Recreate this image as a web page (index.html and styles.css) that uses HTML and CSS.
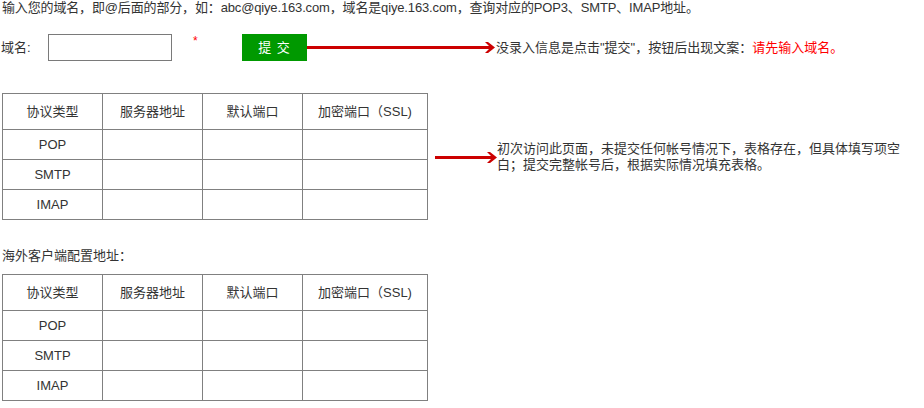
FILE: index.html
```html
<!DOCTYPE html>
<html lang="zh-CN">
<head>
<meta charset="utf-8">
<title>域名查询</title>
<link rel="stylesheet" href="styles.css">
</head>
<body>
<p class="intro">输入您的域名，即@后面的部分，如：abc@qiye.163.com，域名是qiye.163.com，查询对应的POP3、SMTP、IMAP地址。</p>

<div class="domain-row">
  <label class="domain-label">域名:</label>
  <input class="domain-input" type="text">
  <span class="required">*</span>
  <button class="submit-btn" type="button">提 交</button>
  <svg class="arrow arrow-long" width="188" height="14" viewBox="0 0 188 14">
    <rect x="0" y="5" width="182" height="3" fill="#cc0000"/>
    <polygon points="178,1 181,1 188,6.5 181,12 178,12 182,8 182,5" fill="#cc0000"/>
  </svg>
  <span class="note">没录入信息是点击"提交"，按钮后出现文案：<span class="warn">请先输入域名。</span></span>
</div>

<div class="result-row">
  <table class="config-table">
    <colgroup><col class="c1"><col class="c2"><col class="c3"><col class="c4"></colgroup>
    <thead>
      <tr><th>协议类型</th><th>服务器地址</th><th>默认端口</th><th>加密端口（SSL)</th></tr>
    </thead>
    <tbody>
      <tr><td>POP</td><td></td><td></td><td></td></tr>
      <tr><td>SMTP</td><td></td><td></td><td></td></tr>
      <tr><td>IMAP</td><td></td><td></td><td></td></tr>
    </tbody>
  </table>
  <svg class="arrow arrow-short" width="62" height="14" viewBox="0 0 62 14">
    <rect x="0" y="5" width="56" height="3" fill="#cc0000"/>
    <polygon points="52,1 55,1 62,6.5 55,12 52,12 56,8 56,5" fill="#cc0000"/>
  </svg>
  <p class="note note-block">初次访问此页面，未提交任何帐号情况下，表格存在，但具体填写项空白；提交完整帐号后，根据实际情况填充表格。</p>
</div>

<p class="overseas">海外客户端配置地址：</p>
<table class="config-table config-table-2">
  <colgroup><col class="c1"><col class="c2"><col class="c3"><col class="c4"></colgroup>
  <thead>
    <tr><th>协议类型</th><th>服务器地址</th><th>默认端口</th><th>加密端口（SSL)</th></tr>
  </thead>
  <tbody>
    <tr><td>POP</td><td></td><td></td><td></td></tr>
    <tr><td>SMTP</td><td></td><td></td><td></td></tr>
    <tr><td>IMAP</td><td></td><td></td><td></td></tr>
  </tbody>
</table>
</body>
</html>
```
FILE: styles.css
```css
html, body {
  margin: 0;
  padding: 0;
  background: #fff;
}
body {
  font-family: "Liberation Sans", "Noto Sans CJK SC", sans-serif;
  font-size: 13px;
  line-height: 16px;
  color: #333;
  padding-left: 2px;
}
.intro {
  margin: 0;
  height: 16px;
  letter-spacing: -0.15px;
}
.domain-row {
  display: flex;
  align-items: center;
  margin-top: 18px;
  height: 27px;
}
.domain-label {
  width: 47px;
  margin-left: -1px;
}
.domain-input {
  box-sizing: border-box;
  width: 124px;
  height: 27px;
  margin: 0;
  border: 1px solid #7a7a7a;
  padding: 0 4px;
  font: inherit;
}
.required {
  color: #ff0000;
  font-size: 12px;
  align-self: flex-start;
  line-height: 12px;
  margin-left: 21px;
  margin-top: 1px;
  width: 49px;
}
.submit-btn {
  box-sizing: border-box;
  width: 65px;
  height: 27px;
  border: 0;
  margin: 0;
  padding: 0;
  background: #009900;
  color: #fff;
  font: inherit;
  letter-spacing: 1px;
}
.arrow {
  display: block;
  flex: none;
}
.note {
  margin-left: 1px;
}
.warn {
  color: #ff0000;
}
.result-row {
  display: flex;
  align-items: center;
  margin-top: 32px;
}
.arrow-short {
  margin-left: 7px;
  margin-top: 2px;
}
.note-block {
  margin: 0;
  width: 410px;
}
.config-table {
  border-collapse: collapse;
  table-layout: fixed;
  width: 425px;
  flex: none;
}
.config-table .c1,
.config-table .c2,
.config-table .c3 { width: 100px; }
.config-table .c4 { width: 125px; }
.config-table th,
.config-table td {
  border: 1px solid #808080;
  padding: 0;
  text-align: center;
  font-weight: normal;
  height: 29px;
}
.config-table th {
  height: 35px;
}
.overseas {
  margin: 28px 0 0;
  height: 16px;
}
.config-table-2 {
  margin-top: 10px;
}
```
